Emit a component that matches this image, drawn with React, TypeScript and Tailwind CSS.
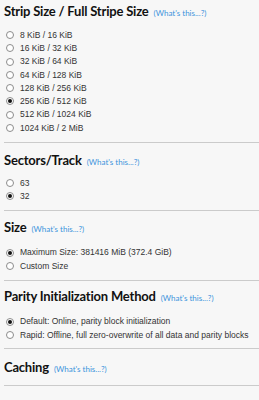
import React from 'react'

type Section = {
  title: string
  options: string[]
  selected: number
  pad: string
  gap: string
}

const sections: Section[] = [
  {
    title: 'Strip Size / Full Stripe Size',
    options: [
      '8 KiB / 16 KiB',
      '16 KiB / 32 KiB',
      '32 KiB / 64 KiB',
      '64 KiB / 128 KiB',
      '128 KiB / 256 KiB',
      '256 KiB / 512 KiB',
      '512 KiB / 1024 KiB',
      '1024 KiB / 2 MiB',
    ],
    selected: 5,
    pad: 'pt-[2px] pb-[7.5px]',
    gap: 'mt-[8.5px]',
  },
  { title: 'Sectors/Track', options: ['63', '32'], selected: 1, pad: 'pt-[7.5px] pb-[7px]', gap: 'mt-[8px]' },
  {
    title: 'Size',
    options: ['Maximum Size: 381416 MiB (372.4 GiB)', 'Custom Size'],
    selected: 0,
    pad: 'pt-[7px] pb-[7px]',
    gap: 'mt-[10px]',
  },
  {
    title: 'Parity Initialization Method',
    options: [
      'Default: Online, parity block initialization',
      'Rapid: Offline, full zero-overwrite of all data and parity blocks',
    ],
    selected: 0,
    pad: 'pt-[6.5px] pb-[6px]',
    gap: 'mt-[10px]',
  },
  { title: 'Caching', options: [], selected: -1, pad: 'pt-[9.5px] pb-[8.5px]', gap: '' },
]

function Radio({ checked }: { checked: boolean }) {
  return (
    <span className="flex h-[8px] w-[8px] shrink-0 items-center justify-center rounded-full border border-[#8c8c8c] bg-white">
      {checked && <span className="h-[4px] w-[4px] rounded-full bg-[#111]" />}
    </span>
  )
}

export default function App() {
  return (
    <div className="min-h-screen w-full bg-[#f7f7f7] text-[#333]">
      {sections.map((s) => (
        <div key={s.title} className={`ml-1 border-b border-[#cbcbcb] ${s.pad}`}>
          <div className="flex h-[18px] items-baseline gap-[5px] leading-[18px]">
            <h2 className="text-[13px] font-bold tracking-[-0.2px] text-[#111] [font-family:Lato,sans-serif]">
              {s.title}
            </h2>
            <a className="text-[8px] text-[#3c94dc] [font-family:Lato,sans-serif]">(What's this...?)</a>
          </div>
          {s.options.length > 0 && (
            <div className={`${s.gap} flex flex-col`}>
              {s.options.map((o, j) => (
                <label
                  key={o}
                  className="flex h-[13.25px] items-center gap-[6px] pl-[2px] text-[8.5px] [font-family:'Liberation_Sans',Arial,sans-serif]"
                >
                  <Radio checked={j === s.selected} />
                  <span className="whitespace-nowrap">{o}</span>
                </label>
              ))}
            </div>
          )}
        </div>
      ))}
    </div>
  )
}
